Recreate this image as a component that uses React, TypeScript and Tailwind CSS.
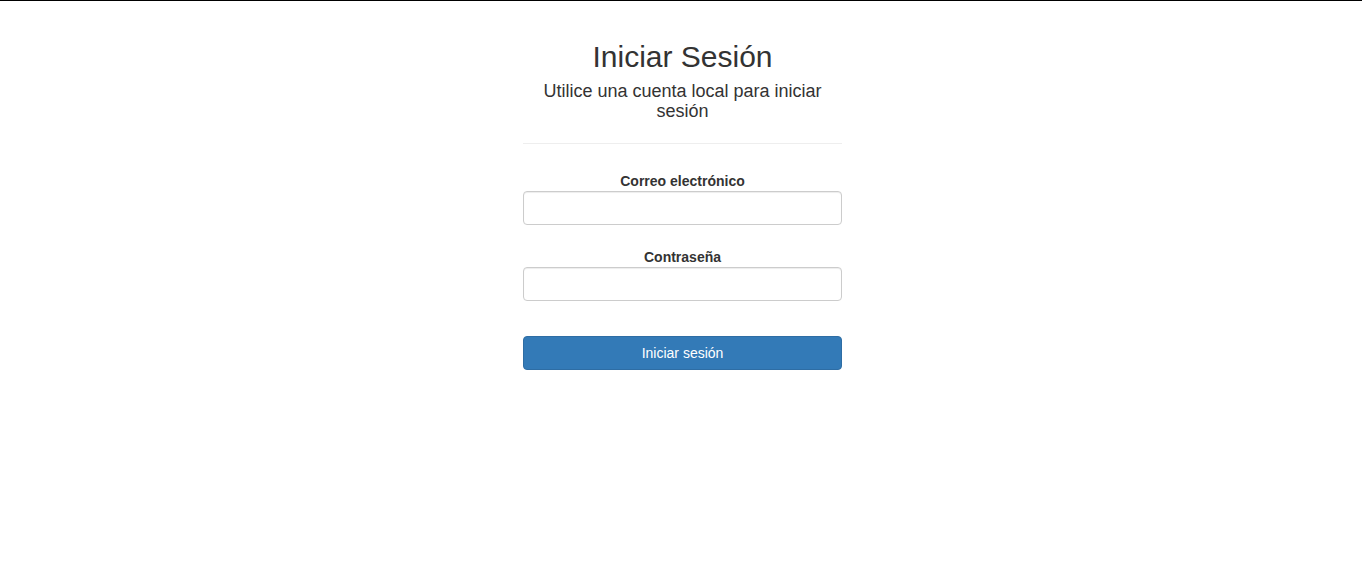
export default function App() {
  return (
    <div
      className="min-h-screen bg-white border-t border-black pl-[3px] text-[#333] text-[14px] leading-[20px]"
      style={{ fontFamily: '"Liberation Sans", Arial, sans-serif' }}
    >
      <div className="w-[319px] mx-auto pt-[39px] text-center">
        <h2 className="text-[30px] leading-[33px] font-normal">Iniciar Sesión</h2>
        <h4 className="mt-[8px] text-[18px] leading-[20px] font-normal">
          Utilice una cuenta local para iniciar sesión
        </h4>
        <hr className="mt-[22px] border-t border-[#eee]" />
        <form className="pt-[27px]" onSubmit={(e) => e.preventDefault()}>
          <div>
            <label htmlFor="email" className="block font-bold">
              Correo electrónico
            </label>
            <input
              id="email"
              type="email"
              className="block w-full h-[34px] px-3 border border-[#ccc] rounded-[4px] shadow-[inset_0_1px_1px_rgba(0,0,0,0.075)] outline-none"
            />
          </div>
          <div className="mt-[22px]">
            <label htmlFor="password" className="block font-bold">
              Contraseña
            </label>
            <input
              id="password"
              type="password"
              className="block w-full h-[34px] px-3 border border-[#ccc] rounded-[4px] shadow-[inset_0_1px_1px_rgba(0,0,0,0.075)] outline-none"
            />
          </div>
          <button
            type="submit"
            className="mt-[35px] block w-full h-[34px] bg-[#337ab7] border border-[#2e6da4] rounded-[4px] text-white text-[14px]"
          >
            Iniciar sesión
          </button>
        </form>
      </div>
    </div>
  );
}
